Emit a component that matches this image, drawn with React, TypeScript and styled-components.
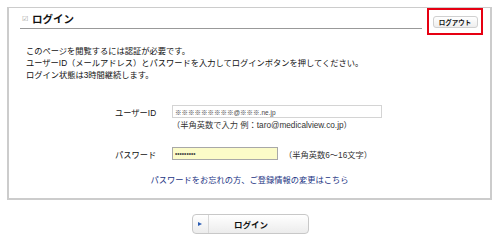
import React from "react"
import styled, { createGlobalStyle } from "styled-components"

const GlobalStyle = createGlobalStyle`
	body {
		margin: 0;
		background: #fff;
		font-family: "Liberation Sans", "Noto Sans CJK JP", sans-serif;
		color: #111;
	}
`

const App: React.FC = () => {
	return (
		<>
			<GlobalStyle />
			<Page>
				<Panel>
					<Header>
						<Title>
							<CheckIcon>☑</CheckIcon>
							ログイン
						</Title>
						<LogoutFrame>
							<SmallButton>ログアウト</SmallButton>
						</LogoutFrame>
					</Header>

					<Intro>
						このページを閲覧するには認証が必要です。
						<br />
						ユーザーID（メールアドレス）とパスワードを入力してログインボタンを押してください。
						<br />
						ログイン状態は3時間継続します。
					</Intro>

					<Form>
						<FormRow>
							<Label>ユーザーID</Label>
							<Input width={210} defaultValue="※※※※※※※※※@※※※.ne.jp" />
						</FormRow>
						<HintRow>（半角英数で入力 例：taro@medicalview.co.jp）</HintRow>

						<FormRow $gap={15}>
							<Label>パスワード</Label>
							<Input width={106} $highlight type="password" defaultValue="abcdefghi" />
							<Hint>（半角英数6〜16文字）</Hint>
						</FormRow>
					</Form>

					<LinkRow>
						<Link href="#">パスワードをお忘れの方、ご登録情報の変更はこちら</Link>
					</LinkRow>
				</Panel>

				<ButtonRow>
					<LoginButton>
						<Arrow />
						<ButtonText>ログイン</ButtonText>
					</LoginButton>
				</ButtonRow>
			</Page>
		</>
	)
}

const Page = styled.div`
	width: 500px;
	height: 246px;
	padding-top: 7px;
	box-sizing: border-box;
`

const Panel = styled.div`
	margin-left: 7px;
	width: 485px;
	height: 193px;
	box-sizing: border-box;
	border: 2px solid #cccccc;
	border-top-width: 1px;
`

const Header = styled.div`
	display: flex;
	align-items: flex-start;
	padding-left: 11px;
`

const Title = styled.div`
	flex: 1;
	display: flex;
	align-items: center;
	height: 21px;
	box-sizing: border-box;
	border-bottom: 1px solid #999;
	padding-left: 2px;
	font-family: "Noto Sans CJK JP", sans-serif;
	font-size: 10.5px;
	font-weight: bold;
	color: #111;
`

const CheckIcon = styled.span`
	font-size: 7px;
	color: #999;
	margin-right: 4px;
	font-weight: normal;
`

const LogoutFrame = styled.div`
	width: 56px;
	height: 27px;
	box-sizing: border-box;
	margin-left: 5px;
	margin-right: 7px;
	border: 2px solid #e60012;
	display: flex;
	align-items: center;
	justify-content: center;
`

const SmallButton = styled.button`
	width: 45px;
	height: 12px;
	padding: 0;
	border: 1px solid #d0d0d0;
	border-radius: 3px;
	background: linear-gradient(#ffffff, #eeeeee);
	font-family: "Noto Sans CJK JP", sans-serif;
	font-size: 6.5px;
	font-weight: bold;
	line-height: 10px;
	color: #111;
`

const Intro = styled.p`
	margin: 11px 0 0 17px;
	font-size: 8.25px;
	line-height: 12px;
	color: #111;
`

const Form = styled.div`
	display: flex;
	flex-direction: column;
	margin: 23px 0 0 106px;
	font-size: 8.25px;
`

const FormRow = styled.div<{ $gap?: number }>`
	display: flex;
	align-items: center;
	height: 13px;
	margin-top: ${(p) => p.$gap ?? 0}px;
`

const Label = styled.div`
	width: 57px;
	flex-shrink: 0;
	color: #111;
`

const Input = styled.input<{ width: number; $highlight?: boolean }>`
	width: ${(p) => p.width}px;
	height: 13px;
	box-sizing: border-box;
	padding: 0 2px;
	border: 1px solid ${(p) => (p.$highlight ? "#a8a8a8" : "#d4d4d4")};
	background: ${(p) => (p.$highlight ? "#fbfbc8" : "#fff")};
	font-family: "Liberation Sans", "Noto Sans CJK JP", sans-serif;
	font-size: 6.5px;
	color: #444;
	outline: none;
`

const HintRow = styled.div`
	margin-top: 2px;
	padding-left: 57px;
	line-height: 12px;
	color: #333;
	white-space: nowrap;
`

const Hint = styled.span`
	margin-left: 6px;
	color: #333;
	white-space: nowrap;
`

const LinkRow = styled.div`
	text-align: center;
	margin-top: 15px;
	font-size: 8.25px;
	line-height: 12px;
`

const Link = styled.a`
	color: #243484;
	text-decoration: none;
`

const ButtonRow = styled.div`
	display: flex;
	justify-content: center;
	margin-top: 14px;
`

const LoginButton = styled.button`
	display: flex;
	align-items: stretch;
	width: 117px;
	height: 20px;
	padding: 0;
	border: 1px solid #c8c8c8;
	border-radius: 4px;
	background: linear-gradient(#ffffff, #ececec);
	font-family: "Noto Sans CJK JP", sans-serif;
`

const Arrow = styled.span`
	width: 15px;
	border-right: 1px solid #d8d8d8;
	display: flex;
	align-items: center;
	justify-content: center;
	&::before {
		content: "";
		border-left: 4px solid #2a5cb4;
		border-top: 2.5px solid transparent;
		border-bottom: 2.5px solid transparent;
	}
`

const ButtonText = styled.span`
	flex: 1;
	display: flex;
	align-items: center;
	justify-content: center;
	font-size: 8.5px;
	font-weight: bold;
	color: #111;
	padding-right: 14px;
`

export default App
